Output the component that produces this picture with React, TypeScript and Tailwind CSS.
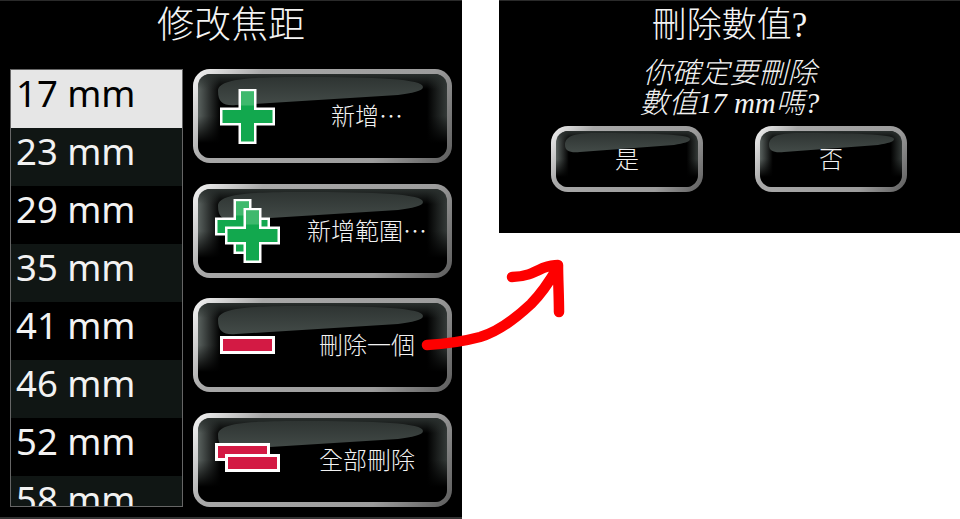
import React from 'react';

const serif = 'font-["Liberation_Serif","Noto_Sans_CJK_TC",serif]';

const Plus = () => (
  <>
    <path
      d="M19.75 1.25H35.25V19.75H53.75V35.25H35.25V53.75H19.75V35.25H1.25V19.75H19.75Z"
      fill="#12a84e"
      stroke="#fff"
      strokeWidth="2.5"
    />
    <rect x="21" y="2.5" width="13" height="14" fill="#3fb96d" />
  </>
);

const Glare = ({ small }: { small?: boolean }) => (
  <svg
    className="absolute left-0 top-0"
    width={small ? 142 : 249}
    height={small ? 56 : 84}
    viewBox={small ? '0 0 142 56' : '0 0 249 84'}
  >
    <defs>
      <linearGradient id={small ? 'gs' : 'gl'} x1="0" y1="0" x2="0" y2="1">
        <stop offset="0" stopColor="#2e3432" />
        <stop offset="1" stopColor="#434b48" />
      </linearGradient>
    </defs>
    {small ? (
      <path d="M9 14C9 6 16 2 40 2C90 2 134 3 134 8C134 11 128 12 118 14L24 21C14 22 9 20 9 14Z" fill="url(#gs)" />
    ) : (
      <path d="M20 17C20 7 40 3 100 3C180 3 225 5 225 13C225 17 214 19 200 21L38 31C26 32 20 29 20 17Z" fill="url(#gl)" />
    )}
  </svg>
);

const Shell = ({ small, className = '', children }: { small?: boolean; className?: string; children: React.ReactNode }) => (
  <div className={`rounded-[17px] bg-[linear-gradient(125deg,#f6f6f6_0%,#a8a8a8_22%,#9c9c9c_75%,#5c5c5c_100%)] p-[5px] ${className}`}>
    <div className="relative flex h-full w-full items-center overflow-hidden rounded-[12px] bg-[linear-gradient(90deg,#5a625f_0%,#000_9%,#000_92%,#343a38_100%)]">
      <div className="absolute inset-0 bg-[linear-gradient(180deg,#2a302e_0%,transparent_18%,transparent_50%,#000_82%)]" />
      <Glare small={small} />
      <div className="relative flex h-full w-full items-center">{children}</div>
    </div>
  </div>
);

const ActionButton = ({ icon, label }: { icon: React.ReactNode; label: string }) => (
  <Shell className="h-[94px] w-[259px]">
    <div className="flex h-full w-[89px] shrink-0 items-center pl-[17px]">{icon}</div>
    <span className="-mt-[2px] flex-1 text-center text-[24px] leading-none text-[#f2f2f2] font-['Noto_Sans_CJK_TC',sans-serif] font-light">
      {label}
    </span>
  </Shell>
);

const rows = ['17 mm', '23 mm', '29 mm', '35 mm', '41 mm', '46 mm', '52 mm', '58 mm'];

export default function App() {
  return (
    <div className="relative flex h-[519px] w-[960px] items-start overflow-hidden bg-white">
      {/* focal length panel */}
      <div className="flex h-[519px] w-[462px] shrink-0 flex-col border-t border-b-2 border-t-[#2a2a2a] border-b-[#333] bg-black">
        <h1 className={`mt-[4px] h-[42px] text-center text-[37px] leading-[42px] text-[#f4f4f4] font-light ${serif}`}>
          修改焦距
        </h1>
        <div className="mt-[22px] flex gap-[10px] pl-[10px]">
          <div className="h-[438px] w-[173px] overflow-hidden border border-[#666] font-['Noto_Sans',sans-serif] text-[36.5px]">
            {rows.map((r, i) => (
              <div
                key={r}
                className={`h-[58px] pl-[5px] leading-[46px] ${
                  i === 0 ? 'bg-[#e6e6e6] text-black' : i % 2 === 1 ? 'bg-[#101614] text-[#f2f2f2]' : 'bg-black text-[#f2f2f2]'
                }`}
              >
                {r}
              </div>
            ))}
          </div>
          <div className="flex flex-col gap-[20.6px]">
            <ActionButton
              label="新增…"
              icon={
                <svg width="55" height="55" viewBox="0 0 55 55" className="ml-[5px]">
                  <Plus />
                </svg>
              }
            />
            <ActionButton
              label="新增範圍…"
              icon={
                <svg width="65" height="64" viewBox="0 0 65 64">
                  <Plus />
                  <g transform="translate(10 9)">
                    <Plus />
                  </g>
                </svg>
              }
            />
            <ActionButton
              label="刪除一個"
              icon={
                <svg width="55" height="18" viewBox="0 0 55 18" className="ml-[5px]">
                  <rect x="1.5" y="1.5" width="52" height="15" fill="#d31a44" stroke="#fff" strokeWidth="3" />
                </svg>
              }
            />
            <ActionButton
              label="全部刪除"
              icon={
                <svg width="65" height="30" viewBox="0 0 65 30" className="mb-[4px]">
                  <rect x="1.5" y="1.5" width="52" height="15" fill="#d31a44" stroke="#fff" strokeWidth="3" />
                  <rect x="11.5" y="12.5" width="52" height="15" fill="#d31a44" stroke="#fff" strokeWidth="3" />
                </svg>
              }
            />
          </div>
        </div>
      </div>

      {/* confirm dialog */}
      <div className="ml-[37px] h-[233px] w-[461px] shrink-0 border-t border-[#2a2a2a] bg-black">
        <h2 className={`mt-[4px] h-[42px] text-center text-[35px] leading-[42px] text-[#f4f4f4] font-light ${serif}`}>
          刪除數值?
        </h2>
        <p className={`mt-[11px] text-center text-[29px] leading-[30px] text-[#f2f2f2] italic font-light ${serif}`}>
          你確定要刪除
          <br />
          數值17 mm嗎?
        </p>
        <div className="mt-[8px] flex gap-[52px] pl-[52px]">
          {['是', '否'].map((t) => (
            <Shell small key={t} className="h-[66px] w-[152px]">
              <span className="-mt-[2px] flex-1 text-center text-[24px] leading-none text-[#f2f2f2] font-['Noto_Sans_CJK_TC',sans-serif] font-light">
                {t}
              </span>
            </Shell>
          ))}
        </div>
      </div>

      {/* hand drawn arrow */}
      <svg className="absolute inset-0 h-[519px] w-[960px]" viewBox="0 0 960 519" fill="none">
        <path
          d="M427 345C445 344 465 341 480 337C497 332 515 319 531 304C543 292 551 279 558 267M512 277C525 277 533 273 543 268C549 266 553 265 558 265C558 280 559 296 559 312"
          stroke="#fe0000"
          strokeWidth="10.5"
          strokeLinecap="round"
          strokeLinejoin="round"
        />
      </svg>
    </div>
  );
}
